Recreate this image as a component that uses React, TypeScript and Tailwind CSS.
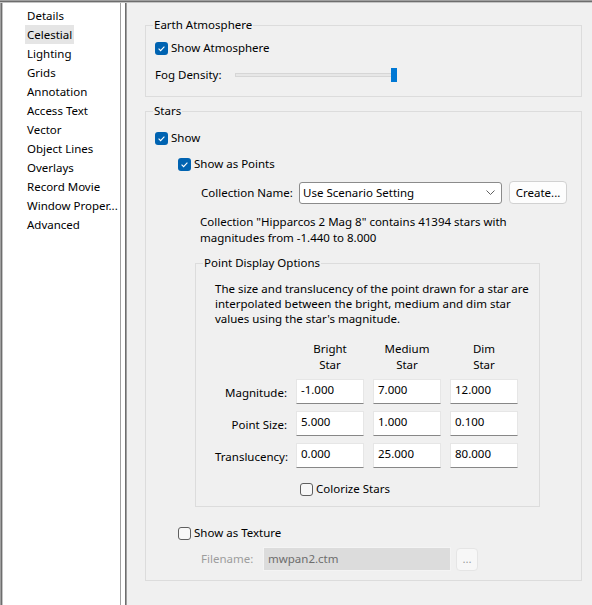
import React from "react";

const navItems = [
  "Details",
  "Celestial",
  "Lighting",
  "Grids",
  "Annotation",
  "Access Text",
  "Vector",
  "Object Lines",
  "Overlays",
  "Record Movie",
  "Window Proper...",
  "Advanced",
];

function CheckBox({ checked, label }: { checked: boolean; label: string }) {
  return (
    <div className="flex h-[20px] items-center gap-[3px]">
      {checked ? (
        <span className="flex h-[13px] w-[13px] items-center justify-center rounded-[3px] bg-[#0063b1]">
          <svg width="13" height="13" viewBox="0 0 13 13">
            <path d="M3.6 6.7 L5.6 8.7 L9.4 4.6" stroke="white" strokeWidth="1.1" fill="none" />
          </svg>
        </span>
      ) : (
        <span className="h-[13px] w-[13px] rounded-[3px] border border-[#5f5f5f] bg-[#f7f7f7]" />
      )}
      <span className="whitespace-nowrap">{label}</span>
    </div>
  );
}

function Cell({ value }: { value: string }) {
  return (
    <div className="h-[25px] border border-[#e6e6e6] border-b-[#878787] bg-white pl-[4px] pt-[2px] leading-[16px]">
      {value}
    </div>
  );
}

const rows = [
  { label: "Magnitude:", values: ["-1.000", "7.000", "12.000"] },
  { label: "Point Size:", values: ["5.000", "1.000", "0.100"] },
  { label: "Translucency:", values: ["0.000", "25.000", "80.000"] },
];

export default function App() {
  return (
    <div className="flex h-[605px] w-[592px] flex-col overflow-hidden bg-[#f0f0f0] font-['Segoe_UI','Noto_Sans',sans-serif] text-[11.5px] leading-[16px] text-black">
      {/* top frame */}
      <div className="h-px bg-[#a0a0a0]" />
      <div className="h-px bg-[#6d6d6d]" />
      <div className="h-px bg-[#c4c4c4]" />

      <div className="flex flex-1">
        {/* nav list */}
        <div className="flex w-[120px] border-l border-[#a0a0a0]">
          <div className="flex flex-1 border-l border-[#6d6d6d]">
            <div className="flex flex-1 flex-col border-l border-[#c4c4c4] bg-white pt-[3px] pl-[22px]">
              {navItems.map((item) => (
                <div
                  key={item}
                  className={`h-[19px] w-fit whitespace-nowrap px-[2px] leading-[19px] ${
                    item === "Celestial" ? "bg-[#e5e5e5]" : ""
                  }`}
                >
                  {item}
                </div>
              ))}
            </div>
          </div>
        </div>

        {/* splitter */}
        <div className="w-px bg-[#a0a0a0]" />
        <div className="w-[4px] bg-white" />
        <div className="w-px bg-[#6d6d6d]" />
        <div className="w-px bg-[#a0a0a0]" />

        {/* settings page */}
        <div className="flex-1 pl-[18px]">
          {/* Earth Atmosphere */}
          <fieldset className="mt-[14px] h-[80px] w-[437px] border border-[#dcdcdc]">
            <legend className="ml-[7px] px-px leading-[16px]">Earth Atmosphere</legend>
            <div className="pl-[9px]">
              <div className="mt-[5px]">
                <CheckBox checked label="Show Atmosphere" />
              </div>
              <div className="mt-[7px] flex h-[20px] items-center">
                <span className="w-[80px]">Fog Density:</span>
                <div className="relative flex h-[20px] w-[163px] items-center">
                  <div className="h-[4px] w-[160px] border border-[#d6d6d6] bg-[#e7e7e7]" />
                  <div className="absolute left-[156px] top-[3px] h-[14px] w-[6px] bg-[#0078d4]" />
                </div>
              </div>
            </div>
          </fieldset>

          {/* Stars */}
          <fieldset className="mt-[6px] h-[478px] w-[437px] border border-[#dcdcdc]">
            <legend className="ml-[7px] px-px leading-[16px]">Stars</legend>
            <div className="pl-[9px]">
              <div className="mt-[9px]">
                <CheckBox checked label="Show" />
              </div>
              <div className="mt-[6px] pl-[23px]">
                <CheckBox checked label="Show as Points" />
              </div>

              <div className="mt-[7px] flex h-[23px] items-center pl-[46px]">
                <span className="w-[98px] whitespace-nowrap">Collection Name:</span>
                <div className="flex h-[22px] w-[203px] items-center justify-between rounded-[3px] border border-[#8b8b8b] bg-white pl-[3px] pr-[6px]">
                  <span>Use Scenario Setting</span>
                  <svg width="9" height="5" viewBox="0 0 9 5">
                    <path d="M0.5 0.5 L4.5 4.5 L8.5 0.5" stroke="#606060" strokeWidth="1" fill="none" />
                  </svg>
                </div>
                <button className="ml-[7px] h-[23px] w-[58px] rounded-[4px] border border-[#d1d1d1] bg-[#fdfdfd] text-center">
                  Create...
                </button>
              </div>

              <p className="mt-[10px] whitespace-nowrap pl-[45px] leading-[16px]">
                Collection "Hipparcos 2 Mag 8" contains 41394 stars with
                <br />
                magnitudes from -1.440 to 8.000
              </p>

              {/* Point Display Options */}
              <fieldset className="ml-[40px] mt-[9px] h-[252px] w-[345px] border border-[#dcdcdc]">
                <legend className="ml-[7px] px-px leading-[16px]">Point Display Options</legend>
                <div className="pl-[19px]">
                  <p className="mt-[10px] whitespace-nowrap leading-[15px]">
                    The size and translucency of the point drawn for a star are
                    <br />
                    interpolated between the bright, medium and dim star
                    <br />
                    values using the star's magnitude.
                  </p>

                  <div className="mt-[15px] grid grid-cols-[72px_68px_68px_68px] gap-x-[9px] text-center leading-[16px]">
                    <span />
                    <span>
                      Bright
                      <br />
                      Star
                    </span>
                    <span>
                      Medium
                      <br />
                      Star
                    </span>
                    <span>
                      Dim
                      <br />
                      Star
                    </span>
                  </div>

                  <div className="mt-[6px] grid grid-cols-[72px_68px_68px_68px] gap-x-[9px] gap-y-[7px]">
                    {rows.map((r) => (
                      <React.Fragment key={r.label}>
                        <span className="self-center whitespace-nowrap pt-[2px] text-right">{r.label}</span>
                        {r.values.map((v, i) => (
                          <Cell key={i} value={v} />
                        ))}
                      </React.Fragment>
                    ))}
                  </div>

                  <div className="ml-[85px] mt-[11px]">
                    <CheckBox checked={false} label="Colorize Stars" />
                  </div>
                </div>
              </fieldset>

              <div className="mt-[16px] pl-[23px]">
                <CheckBox checked={false} label="Show as Texture" />
              </div>

              <div className="mt-[4px] flex h-[24px] items-center pl-[46px]">
                <span className="w-[62px] text-[#9d9d9d]">Filename:</span>
                <div className="flex h-[24px] w-[188px] items-center border border-[#f4f4f4] bg-[#dcdcdc] pl-[4px] text-[#6d6d6d]">
                  mwpan2.ctm
                </div>
                <button className="ml-[5px] h-[23px] w-[22px] rounded-[4px] border border-[#e5e5e5] bg-[#f7f7f7] text-[#9d9d9d]">
                  ...
                </button>
              </div>
            </div>
          </fieldset>
        </div>
      </div>
    </div>
  );
}
